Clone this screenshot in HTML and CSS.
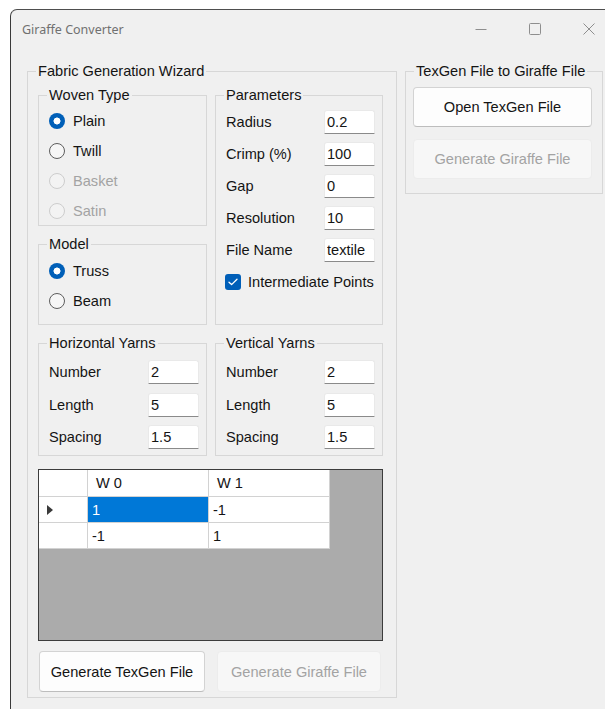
FILE: index.html
```html
<!DOCTYPE html>
<html lang="en">
<head>
<meta charset="utf-8">
<title>Giraffe Converter</title>
<link rel="stylesheet" href="styles.css">
</head>
<body>
<div class="window">
  <div class="titlebar">
    <span class="title">Giraffe Converter</span>
    <div class="caption-buttons">
      <span class="caption-btn" aria-label="Minimize">
        <svg width="12" height="12" viewBox="0 0 12 12"><path d="M0.5 6.5H11.5" stroke="#8e8e8e" stroke-width="1" fill="none"/></svg>
      </span>
      <span class="caption-btn" aria-label="Maximize">
        <svg width="12" height="12" viewBox="0 0 12 12"><rect x="0.5" y="0.5" width="11" height="11" rx="1" stroke="#8e8e8e" stroke-width="1" fill="none"/></svg>
      </span>
      <span class="caption-btn" aria-label="Close">
        <svg width="12" height="12" viewBox="0 0 12 12"><path d="M0.5 0.5L11.5 11.5M11.5 0.5L0.5 11.5" stroke="#8e8e8e" stroke-width="1" fill="none"/></svg>
      </span>
    </div>
  </div>

  <div class="client">
    <fieldset class="group wizard">
      <legend>Fabric Generation Wizard</legend>

      <div class="wizard-grid">
        <fieldset class="group woven">
          <legend>Woven Type</legend>
          <label class="radio"><input type="radio" name="woven" checked>Plain</label>
          <label class="radio"><input type="radio" name="woven">Twill</label>
          <label class="radio disabled"><input type="radio" name="woven" disabled>Basket</label>
          <label class="radio disabled"><input type="radio" name="woven" disabled>Satin</label>
        </fieldset>

        <fieldset class="group params">
          <legend>Parameters</legend>
          <div class="fields">
            <div class="field"><span>Radius</span><input class="tb" type="text" value="0.2"></div>
            <div class="field"><span>Crimp (%)</span><input class="tb" type="text" value="100"></div>
            <div class="field"><span>Gap</span><input class="tb" type="text" value="0"></div>
            <div class="field"><span>Resolution</span><input class="tb" type="text" value="10"></div>
            <div class="field"><span>File Name</span><input class="tb" type="text" value="textile"></div>
            <label class="check">
              <span class="box">
                <svg width="10" height="8" viewBox="0 0 10 8"><path d="M1 4.2L3.6 6.6L9 1.2" stroke="#fff" stroke-width="1.3" fill="none" stroke-linecap="round" stroke-linejoin="round"/></svg>
              </span>
              <span class="check-text">Intermediate Points</span>
            </label>
          </div>
        </fieldset>

        <fieldset class="group model">
          <legend>Model</legend>
          <label class="radio"><input type="radio" name="model" checked>Truss</label>
          <label class="radio"><input type="radio" name="model">Beam</label>
        </fieldset>

        <fieldset class="group yarns hyarns">
          <legend>Horizontal Yarns</legend>
          <div class="fields">
            <div class="field"><span>Number</span><input class="tb" type="text" value="2"></div>
            <div class="field"><span>Length</span><input class="tb" type="text" value="5"></div>
            <div class="field"><span>Spacing</span><input class="tb" type="text" value="1.5"></div>
          </div>
        </fieldset>

        <fieldset class="group yarns vyarns">
          <legend>Vertical Yarns</legend>
          <div class="fields">
            <div class="field"><span>Number</span><input class="tb" type="text" value="2"></div>
            <div class="field"><span>Length</span><input class="tb" type="text" value="5"></div>
            <div class="field"><span>Spacing</span><input class="tb" type="text" value="1.5"></div>
          </div>
        </fieldset>
      </div>

      <div class="pattern">
        <table class="pattern-table">
          <colgroup>
            <col class="c-head"><col class="c-cell"><col class="c-cell">
          </colgroup>
          <thead>
            <tr class="hdr"><th class="rowhead"></th><th>W 0</th><th>W 1</th></tr>
          </thead>
          <tbody>
            <tr><td class="rowhead"><span class="current"></span></td><td class="selected">1</td><td>-1</td></tr>
            <tr><td class="rowhead"></td><td>-1</td><td>1</td></tr>
          </tbody>
        </table>
      </div>

      <div class="wizard-actions">
        <button class="btn btn-texgen" type="button">Generate TexGen File</button>
        <button class="btn btn-giraffe" type="button" disabled>Generate Giraffe File</button>
      </div>
    </fieldset>

    <fieldset class="group convert">
      <legend>TexGen File to Giraffe File</legend>
      <div class="convert-actions">
        <button class="btn" type="button">Open TexGen File</button>
        <button class="btn" type="button" disabled>Generate Giraffe File</button>
      </div>
    </fieldset>
  </div>
</div>
</body>
</html>
```

FILE: styles.css
```css
:root {
  --ui-font: "Liberation Sans", Arial, sans-serif;
  --ui-size: 14.6px;
  --ink: #141414;
}

html, body {
  margin: 0;
  height: 100%;
  overflow: hidden;
  background: #ffffff;
}

body {
  font-family: var(--ui-font);
  font-size: var(--ui-size);
  color: var(--ink);
  white-space: nowrap;
}

/* window frame */
.window {
  box-sizing: border-box;
  width: 595px;
  height: 700px;
  margin: 9px 0 0 10px;
  background: #f0f0f0;
  border-left: 1px solid #3a3a3a;
  border-top: 1px solid #4e4e4e;
  border-top-left-radius: 7px;
}

.titlebar {
  height: 38px;
  display: flex;
  align-items: center;
  padding-left: 11px;
}

.title {
  font-family: "Noto Sans", "Open Sans", sans-serif;
  font-size: 12.5px;
  color: #707070;
}

.caption-buttons {
  margin-left: auto;
  display: flex;
  gap: 30px;
  padding-right: 4px;
}

.caption-btn {
  width: 24px;
  height: 24px;
  display: flex;
  align-items: center;
  justify-content: center;
}

.client {
  display: flex;
  align-items: flex-start;
  gap: 8px;
  padding: 15px 0 0 16px;
}

/* group boxes */
.group {
  box-sizing: border-box;
  margin: 0;
  min-width: 0;
  border: 1px solid #d7d7d7;
  padding: 0 7px 0 10px;
}

.group > legend {
  padding: 0 2px;
  margin-left: -2px;
  line-height: 16px;
  font-size: var(--ui-size);
  color: var(--ink);
}

.wizard {
  width: 370px;
  height: 635px;
  padding: 8px 13px 5px 10px;
}

.wizard-grid {
  display: grid;
  grid-template-columns: 169px 168px;
  grid-template-rows: 139px 89px 121px;
  column-gap: 8px;
  row-gap: 10px;
}

.wizard-grid > .group {
  height: 100%;
}

.woven { grid-column: 1; grid-row: 1; padding-top: 3px; }
.model { grid-column: 1; grid-row: 2; padding-top: 4px; }
.params { grid-column: 2; grid-row: 1 / span 2; padding-top: 7px; }
.hyarns { grid-column: 1; grid-row: 3; padding-top: 9px; }
.vyarns { grid-column: 2; grid-row: 3; padding-top: 9px; }

/* radio buttons */
.radio {
  height: 30px;
  display: flex;
  align-items: center;
  gap: 8px;
}

.radio input {
  appearance: none;
  -webkit-appearance: none;
  box-sizing: border-box;
  width: 16px;
  height: 16px;
  margin: 0;
  border-radius: 50%;
  border: 1px solid #5d5d5d;
  background: #f6f6f6;
}

.radio input:checked {
  border: none;
  background: radial-gradient(circle at center, #ffffff 0 3.2px, #005fb8 3.8px);
}

.radio.disabled {
  color: #a3a3a3;
}

.radio input:disabled {
  border-color: #cdcdcd;
  background: #f3f3f3;
}

/* label + text box rows */
.fields {
  display: flex;
  flex-direction: column;
  gap: 8px;
}

.yarns .fields {
  gap: 8.5px;
}

.field {
  height: 24px;
  display: flex;
  align-items: center;
  justify-content: space-between;
}

.tb {
  box-sizing: border-box;
  width: 51px;
  height: 24px;
  margin: 0;
  padding: 0 2px;
  border: 1px solid #e9e9e9;
  border-bottom-color: #8a8a8a;
  border-radius: 3px 3px 0 0;
  background: #ffffff;
  font-family: var(--ui-font);
  font-size: var(--ui-size);
  color: var(--ink);
  outline: none;
}

.check {
  height: 24px;
  display: flex;
  align-items: center;
  gap: 7px;
  margin-left: -1px;
  margin-right: -6px;
}

.check .box {
  flex: none;
  width: 16px;
  height: 16px;
  border-radius: 3px;
  background: #005fb8;
  display: flex;
  align-items: center;
  justify-content: center;
}

/* weave pattern grid */
.pattern {
  box-sizing: border-box;
  height: 172px;
  margin-top: 13px;
  border: 1px solid #3c3c3c;
  background: #ababab;
}

.pattern-table {
  border-collapse: separate;
  border-spacing: 0;
  table-layout: fixed;
  width: 291px;
}

.c-head { width: 49px; }
.c-cell { width: 121px; }

.pattern-table th,
.pattern-table td {
  box-sizing: border-box;
  background: #ffffff;
  border-right: 1px solid #d2d2d2;
  border-bottom: 1px solid #d2d2d2;
  font-weight: normal;
  font-size: var(--ui-size);
  text-align: left;
  color: var(--ink);
  padding: 0 0 0 4px;
  height: 26px;
}

.pattern-table .hdr th {
  height: 27px;
  padding-left: 8px;
}

.pattern-table td.selected {
  background: #0078d7;
  color: #ffffff;
}

.pattern-table .rowhead {
  padding-left: 8px;
}

.current {
  display: block;
  width: 0;
  height: 0;
  border-left: 6px solid #3a3a3a;
  border-top: 5px solid transparent;
  border-bottom: 5px solid transparent;
}

/* push buttons */
.btn {
  box-sizing: border-box;
  height: 41px;
  margin: 0;
  padding: 0;
  border: 1px solid #d3d3d3;
  border-bottom-color: #bdbdbd;
  border-radius: 4px;
  background: #fdfdfd;
  font-family: var(--ui-font);
  font-size: var(--ui-size);
  color: var(--ink);
}

.btn:disabled {
  background: #f7f7f7;
  border-color: #ececec;
  color: #a3a3a3;
}

.wizard-actions {
  display: flex;
  gap: 12px;
  margin-top: 10px;
  padding-left: 1px;
}

.btn-texgen { width: 166px; }
.btn-giraffe { width: 164px; }

.convert {
  width: 198px;
  padding: 8px 10px 14px 7px;
}

.convert > legend {
  margin-left: 1px;
}

.convert-actions {
  display: flex;
  flex-direction: column;
  gap: 12px;
}

.convert-actions .btn {
  width: 179px;
  height: 40px;
}
```
